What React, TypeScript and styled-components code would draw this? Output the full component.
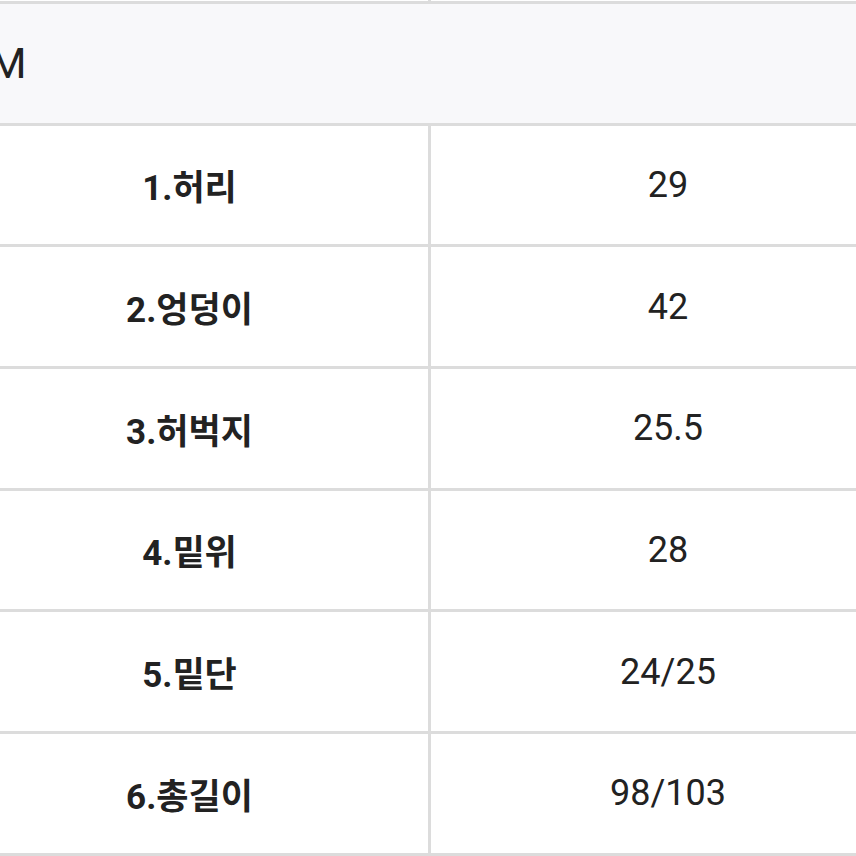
import React from 'react';
import styled, { createGlobalStyle } from 'styled-components';

const GlobalStyle = createGlobalStyle`
  html, body {
    margin: 0;
    padding: 0;
    background: #fff;
    overflow: hidden;
  }
  body {
    font-family: Roboto, "Noto Sans CJK KR", sans-serif;
    color: #222;
  }
`;

const rows = [
  { label: '1.허리', value: '29' },
  { label: '2.엉덩이', value: '42' },
  { label: '3.허벅지', value: '25.5' },
  { label: '4.밑위', value: '28' },
  { label: '5.밑단', value: '24/25' },
  { label: '6.총길이', value: '98/103' },
];

const App: React.FC = () => {
  return (
    <>
      <GlobalStyle />
      <Page>
        <Tick />
        <SizeTable>
          <HeaderCell>M</HeaderCell>
          {rows.map((r) => (
            <React.Fragment key={r.label}>
              <Cell bold>{r.label}</Cell>
              <Cell>{r.value}</Cell>
            </React.Fragment>
          ))}
        </SizeTable>
      </Page>
    </>
  );
};

export default App;

const Page = styled.div`
  width: 856px;
  height: 856px;
  overflow: hidden;
`;

// 위쪽 표에서 이어지는 세로선 끝부분
const Tick = styled.div`
  width: 3px;
  height: 1px;
  margin-left: 428px;
  background: #dcdcdc;
`;

const SizeTable = styled.div`
  display: grid;
  grid-template-columns: 477px 474px;
  grid-auto-rows: 118.67px;
  gap: 3px;
  padding: 3px;
  margin-left: -52px;
  width: max-content;
  background: #dcdcdc;
`;

const HeaderCell = styled.div`
  grid-column: 1 / -1;
  display: flex;
  align-items: center;
  padding-left: 38px;
  background: #f8f8fa;
  font-size: 43px;
  font-weight: 400;
  color: #222;
`;

const Cell = styled.div<{ bold?: boolean }>`
  display: flex;
  align-items: center;
  justify-content: center;
  background: #fff;
  font-size: ${(p) => (p.bold ? 35 : 36)}px;
  font-weight: ${(p) => (p.bold ? 700 : 400)};
  color: #222;
`;
